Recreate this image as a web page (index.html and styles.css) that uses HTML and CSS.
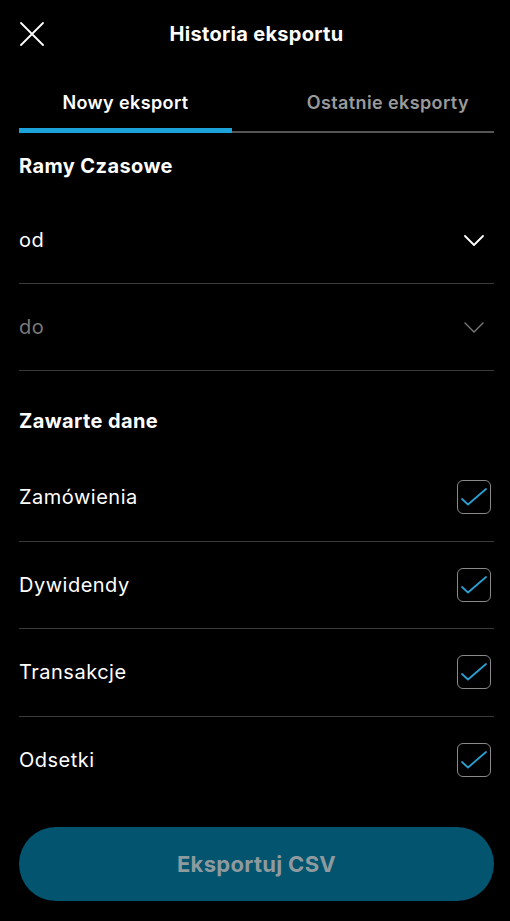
FILE: index.html
```html
<!DOCTYPE html>
<html lang="pl">
<head>
    <meta charset="UTF-8">
    <title>Historia eksportu</title>
    <link rel="stylesheet" href="styles.css">
</head>
<body>
    <div class="sheet">
        <header class="top">
            <button class="close" aria-label="Zamknij">
                <svg width="24" height="24" viewBox="0 0 24 24">
                    <path d="M1 1 L23 23 M23 1 L1 23" stroke="#fff" stroke-width="1.8" fill="none" stroke-linecap="round"/>
                </svg>
            </button>
            <h1>Historia eksportu</h1>
        </header>

        <nav class="tabs">
            <div class="tab active">Nowy eksport</div>
            <div class="tab other">Ostatnie eksporty</div>
        </nav>

        <h2 class="section-title">Ramy Czasowe</h2>

        <div class="selects">
            <div class="row">
                <span>od</span>
                <svg class="chevron" width="20" height="11" viewBox="0 0 20 11">
                    <path d="M1 1 L10 10 L19 1" stroke="#fff" stroke-width="1.8" fill="none" stroke-linecap="round" stroke-linejoin="round"/>
                </svg>
            </div>
            <div class="row disabled">
                <span>do</span>
                <svg class="chevron" width="20" height="11" viewBox="0 0 20 11">
                    <path d="M1 1 L10 10 L19 1" stroke="#7a7a7a" stroke-width="1.4" fill="none" stroke-linecap="round" stroke-linejoin="round"/>
                </svg>
            </div>
        </div>

        <h2 class="section-title second">Zawarte dane</h2>

        <div class="checks">
            <label class="row">
                <span>Zamówienia</span>
                <span class="box"><svg width="34" height="34" viewBox="0 0 34 34"><path d="M5 19 L11 24.5 L29 9" stroke="#2a9fd0" stroke-width="1.8" fill="none" stroke-linecap="round" stroke-linejoin="round"/></svg></span>
            </label>
            <label class="row">
                <span>Dywidendy</span>
                <span class="box"><svg width="34" height="34" viewBox="0 0 34 34"><path d="M5 19 L11 24.5 L29 9" stroke="#2a9fd0" stroke-width="1.8" fill="none" stroke-linecap="round" stroke-linejoin="round"/></svg></span>
            </label>
            <label class="row">
                <span>Transakcje</span>
                <span class="box"><svg width="34" height="34" viewBox="0 0 34 34"><path d="M5 19 L11 24.5 L29 9" stroke="#2a9fd0" stroke-width="1.8" fill="none" stroke-linecap="round" stroke-linejoin="round"/></svg></span>
            </label>
            <label class="row">
                <span>Odsetki</span>
                <span class="box"><svg width="34" height="34" viewBox="0 0 34 34"><path d="M5 19 L11 24.5 L29 9" stroke="#2a9fd0" stroke-width="1.8" fill="none" stroke-linecap="round" stroke-linejoin="round"/></svg></span>
            </label>
        </div>

        <button class="export" disabled>Eksportuj CSV</button>
    </div>
</body>
</html>
```

FILE: styles.css
```css
body {
    margin: 0;
    background: #000;
    color: #fff;
    font-family: 'Inter', 'Noto Sans', sans-serif;
}

.sheet {
    padding: 0 16px 0 19px;
}

.top {
    display: flex;
    align-items: center;
    justify-content: center;
    position: relative;
    height: 68px;
}

.close {
    position: absolute;
    left: 1px;
    top: 22px;
    background: none;
    border: none;
    padding: 0;
    width: 24px;
    height: 24px;
}

.top h1 {
    margin: 0;
    font-size: 20px;
    letter-spacing: 0.3px;
    font-weight: 700;
}

.tabs {
    display: flex;
    border-bottom: 2px solid #555;
}

.tab {
    box-sizing: border-box;
    height: 63px;
    padding-top: 23px;
    font-size: 18px;
    line-height: 24px;
    letter-spacing: 0.4px;
    font-weight: 600;
    color: #9a9a9a;
}

.tab.active {
    width: 213px;
    height: 65px;
    margin-bottom: -2px;
    text-align: center;
    color: #fff;
    border-bottom: 5px solid #1ca3d9;
}

.tab.other {
    flex: 1;
    text-align: right;
    padding-right: 25px;
}

.section-title {
    margin: 0;
    padding-top: 20px;
    font-size: 20px;
    line-height: 26px;
    letter-spacing: 0.4px;
    font-weight: 700;
}

.section-title.second {
    padding-top: 37px;
}

.selects {
    margin-top: 18px;
}

.row {
    box-sizing: border-box;
    display: flex;
    align-items: center;
    justify-content: space-between;
    height: 87px;
    font-size: 20px;
    letter-spacing: 0.5px;
    border-bottom: 1px solid #3a3a3a;
}

.row.disabled {
    color: #7a7a7a;
}

.chevron {
    margin-right: 10px;
}

.checks {
    margin-top: 20px;
}

.checks .row {
    height: 87.5px;
}

.checks .row:last-child {
    border-bottom: none;
}

.box {
    box-sizing: border-box;
    display: flex;
    width: 34px;
    height: 34px;
    margin-right: 3px;
    border: 1px solid #8a8a8a;
    border-radius: 6px;
    overflow: hidden;
}

.box svg {
    margin: -1px;
}

.export {
    display: block;
    width: 100%;
    height: 74px;
    margin-top: 23px;
    border: none;
    border-radius: 37px;
    background: #03546f;
    color: #8e9a9e;
    font-family: 'Inter', 'Noto Sans', sans-serif;
    font-size: 22px;
    letter-spacing: 0.3px;
    font-weight: 700;
}
```
